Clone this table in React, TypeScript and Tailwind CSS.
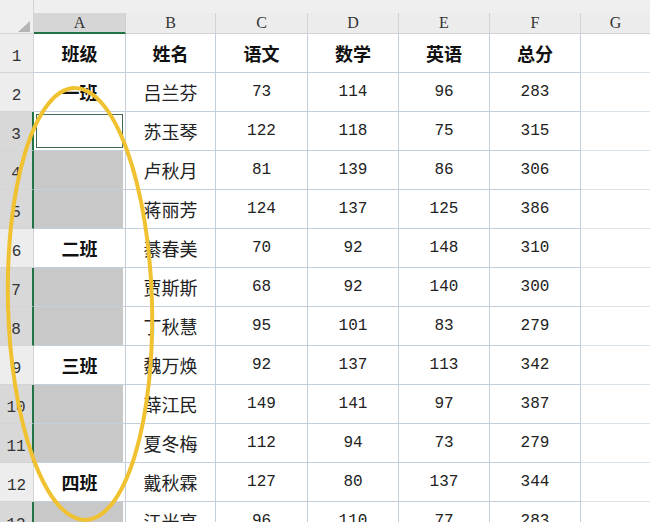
import React from "react";

type Row = {
  n: number;
  cls?: string;
  name: string;
  scores: number[];
};

const rows: Row[] = [
  { n: 2, cls: "一班", name: "吕兰芬", scores: [73, 114, 96, 283] },
  { n: 3, name: "苏玉琴", scores: [122, 118, 75, 315] },
  { n: 4, name: "卢秋月", scores: [81, 139, 86, 306] },
  { n: 5, name: "蒋丽芳", scores: [124, 137, 125, 386] },
  { n: 6, cls: "二班", name: "綦春美", scores: [70, 92, 148, 310] },
  { n: 7, name: "贾斯斯", scores: [68, 92, 140, 300] },
  { n: 8, name: "丁秋慧", scores: [95, 101, 83, 279] },
  { n: 9, cls: "三班", name: "魏万焕", scores: [92, 137, 113, 342] },
  { n: 10, name: "薛江民", scores: [149, 141, 97, 387] },
  { n: 11, name: "夏冬梅", scores: [112, 94, 73, 279] },
  { n: 12, cls: "四班", name: "戴秋霖", scores: [127, 80, 137, 344] },
  { n: 13, name: "江光亮", scores: [96, 110, 77, 283] },
];

const cols = ["C", "D", "E", "F"];
const colWidths = ["w-[92px]", "w-[91px]", "w-[91px]", "w-[91px]"];

const cjk = "font-['Noto_Sans_CJK_SC',sans-serif]";
const mono = "font-['Liberation_Mono',monospace]";
const serif = "font-['Liberation_Serif',serif]";
const line = "border-[#c3d0dc]";

export default function App() {
  return (
    <div className="relative h-[522px] w-[650px] overflow-hidden bg-white">
      {/* column letters */}
      <div className="flex h-[34px] bg-[#efefef]">
        <div className="relative w-[34px] border-b border-r border-[#d4d4d4]">
          <div className="absolute left-[18px] top-[21px] h-0 w-0 border-b-[11px] border-l-[12px] border-b-[#b5b5b5] border-l-transparent" />
        </div>
        <div
          className={`mt-[13px] flex w-[92px] items-center justify-center border-b-2 border-r border-b-[#217346] border-r-[#cfcfcf] bg-[#d6d6d6] text-[16px] text-[#333] ${serif}`}
        >
          A
        </div>
        <div
          className={`mt-[13px] flex w-[90px] items-center justify-center border-b border-r border-[#d4d4d4] bg-[#ececec] text-[16px] text-[#333] ${serif}`}
        >
          B
        </div>
        {cols.map((c, i) => (
          <div
            key={c}
            className={`mt-[13px] flex ${colWidths[i]} items-center justify-center border-b border-r border-[#d4d4d4] bg-[#ececec] text-[16px] text-[#333] ${serif}`}
          >
            {c}
          </div>
        ))}
        <div
          className={`mt-[13px] flex w-[69px] items-center justify-center border-b border-[#d4d4d4] bg-[#ececec] text-[16px] text-[#333] ${serif}`}
        >
          G
        </div>
      </div>

      {/* header row */}
      <div className="flex h-[39px]">
        <div
          className={`flex w-[34px] items-end justify-center border-b border-r border-[#d4d4d4] bg-[#ededed] pb-[3px] text-[16px] text-[#333] ${mono}`}
        >
          1
        </div>
        <div
          className={`flex w-[92px] items-center justify-center border-b border-r ${line} text-[18px] font-bold text-[#111] ${cjk}`}
        >
          班级
        </div>
        <div
          className={`flex w-[90px] items-center justify-center border-b border-r ${line} text-[18px] font-bold text-[#111] ${cjk}`}
        >
          姓名
        </div>
        {["语文", "数学", "英语", "总分"].map((t, i) => (
          <div
            key={t}
            className={`flex ${colWidths[i]} items-center justify-center border-b border-r ${line} text-[18px] font-bold text-[#111] ${cjk}`}
          >
            {t}
          </div>
        ))}
        <div className="w-[69px] border-b border-[#dbe3ea]" />
      </div>

      {rows.map((r) => {
        const picked = !r.cls;
        const active = r.n === 3;
        return (
          <div key={r.n} className="flex h-[39px]">
            <div
              className={`flex w-[34px] items-end justify-center border-b border-[#d4d4d4] pb-[3px] text-[16px] text-[#333] ${mono} ${
                picked
                  ? "border-r-2 border-r-[#217346] bg-[#d8d8d8]"
                  : "border-r bg-[#ededed]"
              }`}
            >
              {r.n}
            </div>
            {active ? (
              <div className={`w-[92px] border-b border-r ${line} bg-white p-[2px]`}>
                <div className="h-full w-full border border-[#3f6a55]" />
              </div>
            ) : picked ? (
              <div className={`w-[92px] border-b border-r ${line} bg-white pr-[2px]`}>
                <div className="h-full w-full bg-[#c8c8c8]" />
              </div>
            ) : (
              <div
                className={`flex w-[92px] items-center justify-center border-b border-r ${line} text-[18px] font-bold text-[#111] ${cjk}`}
              >
                {r.cls}
              </div>
            )}
            <div
              className={`flex w-[90px] items-center justify-center border-b border-r ${line} text-[18px] text-[#222] ${cjk}`}
            >
              {r.name}
            </div>
            {r.scores.map((s, i) => (
              <div
                key={i}
                className={`flex ${colWidths[i]} items-center justify-center border-b border-r ${line} text-[16px] text-[#222] ${mono}`}
              >
                {s}
              </div>
            ))}
            <div className="w-[69px] border-b border-[#dbe3ea]" />
          </div>
        );
      })}

      {/* hand-drawn highlight ring */}
      <svg
        className="pointer-events-none absolute left-0 top-0"
        width="650"
        height="522"
        viewBox="0 0 650 522"
      >
        <ellipse
          cx="80"
          cy="304"
          rx="72"
          ry="216"
          transform="rotate(-1.5 80 304)"
          fill="none"
          stroke="#f0c232"
          strokeWidth="4"
        />
      </svg>
    </div>
  );
}
